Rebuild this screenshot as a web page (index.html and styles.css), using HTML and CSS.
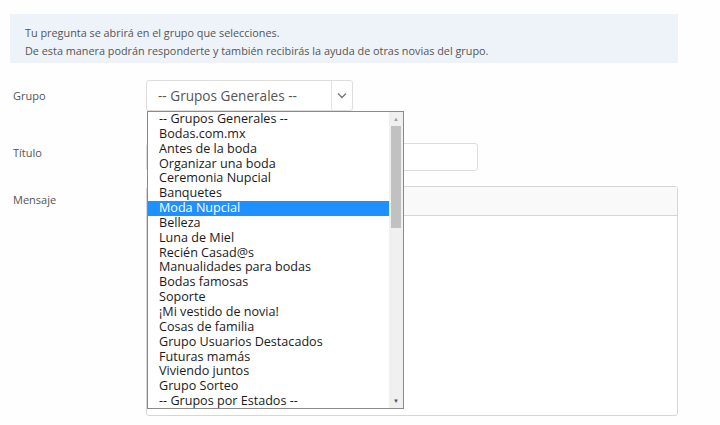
FILE: index.html
```html
<!DOCTYPE html>
<html lang="es">
<head>
    <meta charset="UTF-8">
    <meta name="viewport" content="width=device-width, initial-scale=1.0">
    <title>Nueva pregunta</title>
    <link rel="stylesheet" href="styles.css">
</head>
<body>
    <div class="notice">
        <p>Tu pregunta se abrirá en el grupo que selecciones.</p>
        <p>De esta manera podrán responderte y también recibirás la ayuda de otras novias del grupo.</p>
    </div>

    <form class="ask-form">
        <!-- Grupo -->
        <div class="row row-group">
            <label class="label">Grupo</label>
            <div class="field">
                <div class="select-box">
                    <span class="select-value">-- Grupos Generales --</span>
                    <span class="select-arrow">
                        <svg width="10" height="7" viewBox="0 0 10 7"><path d="M1 1.5 L5 5.5 L9 1.5" fill="none" stroke="#777" stroke-width="1.4"/></svg>
                    </span>
                </div>
            </div>
        </div>

        <!-- Titulo -->
        <div class="row row-title">
            <label class="label">Título</label>
            <div class="field">
                <input type="text" class="text-input">
            </div>
        </div>

        <!-- Mensaje -->
        <div class="row row-message">
            <label class="label">Mensaje</label>
            <div class="field">
                <div class="editor">
                    <div class="editor-toolbar"></div>
                    <div class="editor-body"></div>
                </div>
            </div>
        </div>

        <!-- open dropdown of the select -->
        <div class="dropdown">
            <ul class="options">
                <li>-- Grupos Generales --</li>
                <li>Bodas.com.mx</li>
                <li>Antes de la boda</li>
                <li>Organizar una boda</li>
                <li>Ceremonia Nupcial</li>
                <li>Banquetes</li>
                <li class="active">Moda Nupcial</li>
                <li>Belleza</li>
                <li>Luna de Miel</li>
                <li>Recién Casad@s</li>
                <li>Manualidades para bodas</li>
                <li>Bodas famosas</li>
                <li>Soporte</li>
                <li>¡Mi vestido de novia!</li>
                <li>Cosas de familia</li>
                <li>Grupo Usuarios Destacados</li>
                <li>Futuras mamás</li>
                <li>Viviendo juntos</li>
                <li>Grupo Sorteo</li>
                <li>-- Grupos por Estados --</li>
            </ul>
            <div class="scrollbar">
                <span class="scroll-btn up">▲</span>
                <span class="scroll-thumb"></span>
                <span class="scroll-btn down">▼</span>
            </div>
        </div>
    </form>
</body>
</html>
```

FILE: styles.css
```css
body {
    font-family: "Open Sans", Arial, sans-serif;
    background-color: #fefefe;
    color: #555;
    margin: 0;
    padding: 0;
}
.notice {
    width: 668px;
    height: 49px;
    box-sizing: border-box;
    margin: 14px 0 0 10px;
    padding: 10px 15px;
    background-color: #edf3f9;
    font-size: 10.85px;
    line-height: 18px;
    color: #555;
}
.notice p { margin: 0; }

.ask-form {
    position: relative;
    padding-top: 17px;
}
.row {
    display: flex;
}
.label {
    width: 146px;
    box-sizing: border-box;
    padding-left: 13px;
    font-size: 11px;
    color: #555;
}
.row-group .label { line-height: 31px; }
.row-title { margin-top: 32px; }
.row-title .label { padding-top: 2px; }
.row-message { margin-top: 15px; }
.row-message .label { padding-top: 6px; }

.select-box {
    width: 207px;
    height: 31px;
    box-sizing: border-box;
    border: 1px solid #ddd;
    border-radius: 3px;
    display: flex;
    align-items: center;
    background-color: #fff;
}
.select-value {
    flex: 1;
    padding-left: 11px;
    font-size: 13.6px;
    color: #555;
}
.select-arrow {
    width: 20px;
    height: 100%;
    border-left: 1px solid #e4e4e4;
    display: flex;
    align-items: center;
    justify-content: center;
}
.text-input {
    width: 332px;
    height: 28px;
    box-sizing: border-box;
    border: 1px solid #ddd;
    border-radius: 3px;
    margin: 0;
    background-color: #fff;
}
.editor {
    width: 532px;
    height: 230px;
    box-sizing: border-box;
    border: 1px solid #d6d6d6;
    border-radius: 3px;
    background-color: #fff;
}
.editor-toolbar {
    height: 28px;
    background-color: #f9f9f9;
    border-bottom: 1px solid #d6d6d6;
}

.dropdown {
    position: absolute;
    left: 147px;
    top: 48px;
    width: 257px;
    height: 298px;
    box-sizing: border-box;
    border: 1px solid #8a8a8a;
    background-color: #fff;
    display: flex;
}
.options {
    flex: 1;
    list-style: none;
    margin: 0;
    padding: 0;
    font-size: 12.6px;
    line-height: 14.85px;
    color: #1a1a1a;
}
.options li {
    padding-left: 11px;
    white-space: nowrap;
}
.options li.active {
    background-color: #1e90ff;
    color: #fff;
}
.scrollbar {
    width: 14px;
    background-color: #f0f0f0;
    display: flex;
    flex-direction: column;
    align-items: center;
}
.scroll-btn {
    height: 14px;
    font-size: 6px;
    line-height: 14px;
    color: #a3a3a3;
}
.scroll-btn.down {
    margin-top: auto;
    color: #505050;
}
.scroll-thumb {
    width: 10px;
    height: 102px;
    background-color: #c1c1c1;
}
```
